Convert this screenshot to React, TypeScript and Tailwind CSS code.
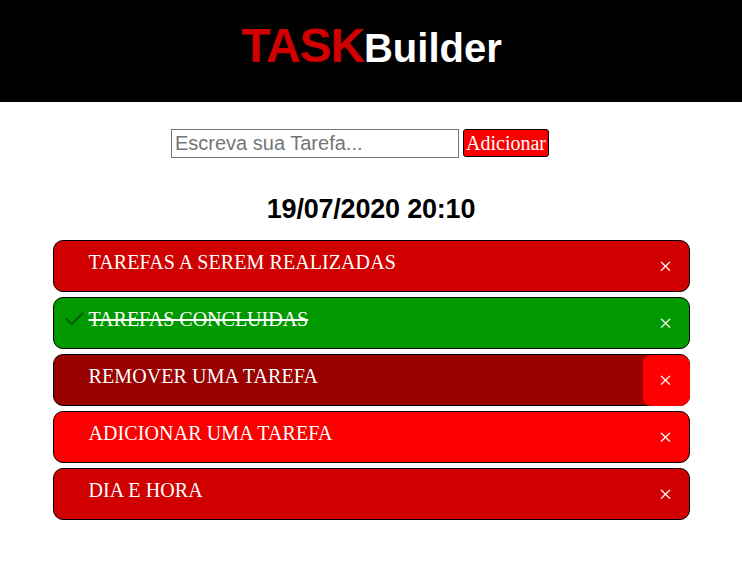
const tasks = [
  { text: "TAREFAS A SEREM REALIZADAS", bg: "bg-[#d00000]", tracking: "tracking-[0.08px]", done: false, hot: false },
  { text: "TAREFAS CONCLUIDAS", bg: "bg-[#009900]", tracking: "tracking-normal", done: true, hot: false },
  { text: "REMOVER UMA TAREFA", bg: "bg-[#990000]", tracking: "tracking-[0.1px]", done: false, hot: true },
  { text: "ADICIONAR UMA TAREFA", bg: "bg-[#fa0000]", tracking: "tracking-[0.1px]", done: false, hot: false },
  { text: "DIA E HORA", bg: "bg-[#d00000]", tracking: "tracking-[0.1px]", done: false, hot: false },
];

export default function App() {
  return (
    <div className="h-[583px] w-[742px] overflow-hidden bg-white font-['Liberation_Serif',serif]">
      <header className="h-[102px] bg-black pt-[18px] pl-px text-center font-['Liberation_Sans',sans-serif] font-bold">
        <h1 className="text-[40px] leading-[56px] text-white">
          <span className="text-[48px] tracking-[-1.1px] text-[#d00000]">TASK</span>Builder
        </h1>
      </header>
      <form className="flex h-[56px] items-end pl-[171px]">
        <input
          className="h-[29px] w-[288px] border border-[#767676] px-[3px] pb-[2px] font-['Liberation_Sans',sans-serif] text-[20px] outline-none placeholder:text-[#757575]"
          placeholder="Escreva sua Tarefa..."
        />
        <button
          type="button"
          className="ml-1 mb-px h-[28px] w-[86px] rounded-[3px] border border-black bg-[#fa0000] text-[20px] leading-[26px] text-white"
        >
          Adicionar
        </button>
      </form>
      <h2 className="mt-[35px] text-center font-['Liberation_Sans',sans-serif] text-[27px] font-bold leading-[32px] tracking-[-0.2px] text-black">
        19/07/2020 20:10
      </h2>
      <ul className="mt-[15px] ml-[53px] flex w-[637px] flex-col gap-[5px]">
        {tasks.map((t) => (
          <li key={t.text} className={`flex h-[52px] rounded-[10px] border border-black text-[20px] text-white ${t.bg}`}>
            <span className="w-[34.5px] pt-[13px] pl-[11px]">
              {t.done && (
                <svg width="20" height="16" viewBox="0 0 20 16" fill="none" stroke="#005a00" strokeWidth="2">
                  <path d="M1 7.5L6.5 13L18 2" />
                </svg>
              )}
            </span>
            <span className={`flex-1 pt-[9px] leading-[24px] ${t.tracking} ${t.done ? "line-through decoration-2" : ""}`}>{t.text}</span>
            <span className={`-mr-px h-[51px] w-[47px] rounded-l-[8px] rounded-r-[10px] pt-[12px] pr-[2px] text-center text-[24px] leading-[26px] ${t.hot ? "bg-[#ff0000]" : ""}`}>×</span>
          </li>
        ))}
      </ul>
    </div>
  );
}
